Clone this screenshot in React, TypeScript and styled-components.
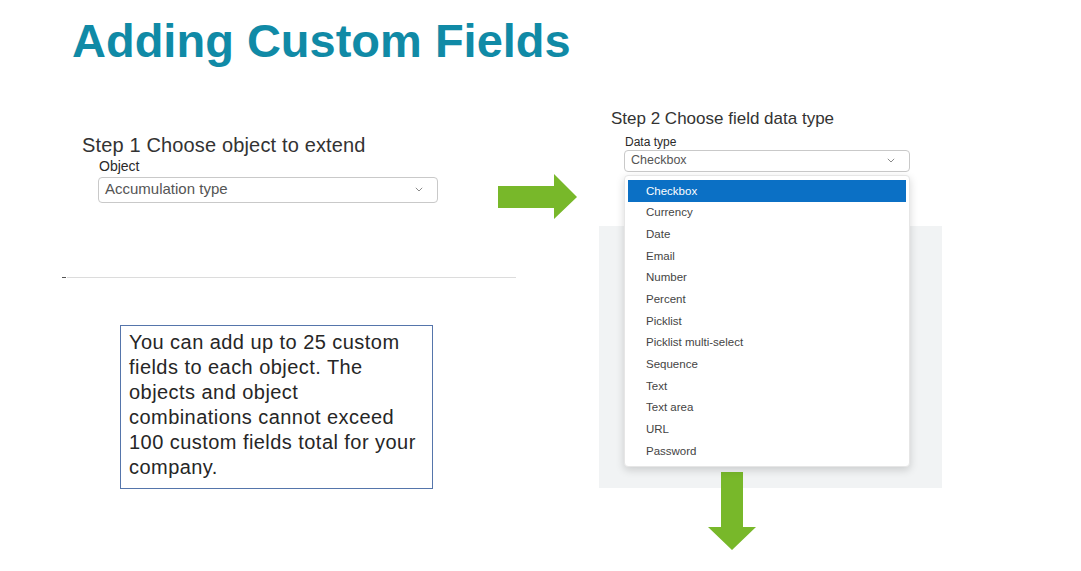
import React from "react";
import styled, { createGlobalStyle } from "styled-components";

const Global = createGlobalStyle`
  html, body { margin: 0; padding: 0; background: #ffffff; }
  body { font-family: "Liberation Sans", Arial, sans-serif; }
`;

const Slide = styled.div`
  position: relative;
  width: 1081px;
  height: 571px;
  overflow: hidden;
  background: #ffffff;
  font-family: "Liberation Sans", Arial, sans-serif;
`;

const Title = styled.h1`
  margin: 11px 0 0 72px;
  font-size: 47px;
  line-height: 59px;
  font-weight: 700;
  color: #108aa6;
`;

const Body = styled.div`
  display: flex;
  align-items: flex-start;
`;

const LeftCol = styled.div`
  flex: none;
  width: 436px;
  margin-left: 62px;
  display: flex;
  flex-direction: column;
  align-items: flex-start;
`;

const StepHeading = styled.h2<{ $size: number; $top: number; $left: number; $ls?: number }>`
  margin: ${(p) => p.$top}px 0 0 ${(p) => p.$left}px;
  font-size: ${(p) => p.$size}px;
  line-height: 22px;
  letter-spacing: ${(p) => p.$ls ?? 0}px;
  font-weight: 400;
  color: #333333;
  white-space: nowrap;
`;

const FieldLabel = styled.div<{ $size: number; $top: number; $left: number }>`
  margin: ${(p) => p.$top}px 0 0 ${(p) => p.$left}px;
  font-size: ${(p) => p.$size}px;
  line-height: ${(p) => Math.round(p.$size * 1.2)}px;
  color: #2a2a2a;
  white-space: nowrap;
`;

const SelectBox = styled.div<{ $w: number; $h: number; $size: number; $top: number; $left: number }>`
  box-sizing: border-box;
  margin: ${(p) => p.$top}px 0 0 ${(p) => p.$left}px;
  width: ${(p) => p.$w}px;
  height: ${(p) => p.$h}px;
  display: flex;
  align-items: center;
  justify-content: space-between;
  padding: 0 14px 2px 6px;
  border: 1px solid #c9c9c9;
  border-radius: 4px;
  background: #ffffff;
  font-size: ${(p) => p.$size}px;
  line-height: 18px;
  color: #555555;
`;

const Divider = styled.div`
  position: relative;
  flex: none;
  width: 449px;
  height: 1px;
  margin: 74px 0 0 5px;
  background: #dcdcdc;
  &::before {
    content: "";
    position: absolute;
    left: -5px;
    top: 0;
    width: 4px;
    height: 1px;
    background: #555;
  }
`;

const NoteBox = styled.div`
  box-sizing: border-box;
  width: 313px;
  height: 164px;
  margin: 47px 0 0 58px;
  padding: 4px 0 0 8px;
  border: 1px solid #5575ab;
  font-size: 20px;
  line-height: 25px;
  letter-spacing: 0.45px;
  color: #262626;
  white-space: nowrap;
`;

const ArrowRight = styled.svg`
  flex: none;
  margin-top: 104px;
`;

const RightCol = styled.div`
  flex: none;
  width: 344px;
  margin: 38px 0 0 21px;
  display: flex;
  flex-direction: column;
  align-items: flex-start;
`;

const SelectWrap = styled.div`
  position: relative;
  margin-left: 26px;
  z-index: 2;
`;

const Menu = styled.ul`
  position: absolute;
  left: 0;
  top: 26px;
  box-sizing: border-box;
  width: 286px;
  margin: 0;
  padding: 4px 3px 4px 3px;
  list-style: none;
  background: #ffffff;
  border: 1px solid #e6e6e6;
  border-radius: 4px;
  box-shadow: 0 3px 9px rgba(0, 0, 0, 0.16);
`;

const MenuItem = styled.li<{ $active?: boolean }>`
  height: 21.67px;
  display: flex;
  align-items: center;
  padding-left: 18px;
  font-size: 11.5px;
  color: ${(p) => (p.$active ? "#ffffff" : "#444444")};
  background: ${(p) => (p.$active ? "#0b70c5" : "transparent")};
`;

const GreyPanel = styled.div`
  width: 343px;
  height: 262px;
  margin-top: 54px;
  margin-left: 1px;
  background: #f1f3f4;
`;

const ArrowDown = styled.svg`
  position: relative;
  z-index: 1;
  margin: -16px 0 0 110px;
`;

const Chevron = () => (
  <svg width="8" height="5" viewBox="0 0 8 5">
    <path d="M0.8 0.8 L4 4 L7.2 0.8" fill="none" stroke="#8a8a8a" strokeWidth="1" />
  </svg>
);

const types = [
  "Checkbox",
  "Currency",
  "Date",
  "Email",
  "Number",
  "Percent",
  "Picklist",
  "Picklist multi-select",
  "Sequence",
  "Text",
  "Text area",
  "URL",
  "Password",
];

export default function App() {
  return (
    <Slide>
      <Global />
      <Title>Adding Custom Fields</Title>
      <Body>
        <LeftCol>
          <StepHeading $size={20} $top={64} $left={20} $ls={0.15}>
            Step 1 Choose object to extend
          </StepHeading>
          <FieldLabel $size={14} $top={2} $left={37}>
            Object
          </FieldLabel>
          <SelectBox $w={340} $h={26} $size={15} $top={2} $left={36}>
            <span>Accumulation type</span>
            <Chevron />
          </SelectBox>
          <Divider />
          <NoteBox>
            You can add up to 25 custom
            <br />
            fields to each object. The
            <br />
            objects and object
            <br />
            combinations cannot exceed
            <br />
            100 custom fields total for your
            <br />
            company.
          </NoteBox>
        </LeftCol>
        <ArrowRight width="79" height="46" viewBox="0 0 79 46">
          <polygon points="0,12 56,12 56,0 79,23 56,45 56,34 0,34" fill="#78b82a" />
        </ArrowRight>
        <RightCol>
          <StepHeading $size={17} $top={0} $left={13}>
            Step 2 Choose field data type
          </StepHeading>
          <FieldLabel $size={12} $top={5} $left={27}>
            Data type
          </FieldLabel>
          <SelectWrap>
            <SelectBox $w={286} $h={22} $size={12.5} $top={1} $left={0}>
              <span>Checkbox</span>
              <Chevron />
            </SelectBox>
            <Menu>
              {types.map((t, i) => (
                <MenuItem key={t} $active={i === 0}>
                  {t}
                </MenuItem>
              ))}
            </Menu>
          </SelectWrap>
          <GreyPanel />
          <ArrowDown width="48" height="78" viewBox="0 0 48 78">
            <polygon points="13,0 35,0 35,55 48,55 24,78 0,55 13,55" fill="#78b82a" />
          </ArrowDown>
        </RightCol>
      </Body>
    </Slide>
  );
}
